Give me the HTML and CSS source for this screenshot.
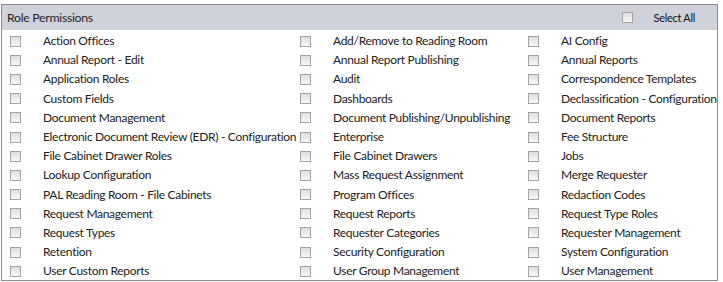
FILE: index.html
```html
<!DOCTYPE html>
<html>

<head>
  <meta name="viewport" content="width=device-width, initial-scale=1">
  <link rel="stylesheet" href="styles.css">
</head>

<body>

  <div class="panel">
    <div class="panel-head">
      <span class="title">Role Permissions</span>
      <label class="select-all"><span class="box"></span><span>Select All</span></label>
    </div>
    <div class="perms">
      <label class="perm"><span class="box"></span>Action Offices</label>
      <label class="perm"><span class="box"></span>Add/Remove to Reading Room</label>
      <label class="perm"><span class="box"></span>AI Config</label>

      <label class="perm"><span class="box"></span>Annual Report - Edit</label>
      <label class="perm"><span class="box"></span>Annual Report Publishing</label>
      <label class="perm"><span class="box"></span>Annual Reports</label>

      <label class="perm"><span class="box"></span>Application Roles</label>
      <label class="perm"><span class="box"></span>Audit</label>
      <label class="perm"><span class="box"></span>Correspondence Templates</label>

      <label class="perm"><span class="box"></span>Custom Fields</label>
      <label class="perm"><span class="box"></span>Dashboards</label>
      <label class="perm"><span class="box"></span>Declassification - Configuration</label>

      <label class="perm"><span class="box"></span>Document Management</label>
      <label class="perm"><span class="box"></span>Document Publishing/Unpublishing</label>
      <label class="perm"><span class="box"></span>Document Reports</label>

      <label class="perm"><span class="box"></span>Electronic Document Review (EDR) - Configuration</label>
      <label class="perm"><span class="box"></span>Enterprise</label>
      <label class="perm"><span class="box"></span>Fee Structure</label>

      <label class="perm"><span class="box"></span>File Cabinet Drawer Roles</label>
      <label class="perm"><span class="box"></span>File Cabinet Drawers</label>
      <label class="perm"><span class="box"></span>Jobs</label>

      <label class="perm"><span class="box"></span>Lookup Configuration</label>
      <label class="perm"><span class="box"></span>Mass Request Assignment</label>
      <label class="perm"><span class="box"></span>Merge Requester</label>

      <label class="perm"><span class="box"></span>PAL Reading Room - File Cabinets</label>
      <label class="perm"><span class="box"></span>Program Offices</label>
      <label class="perm"><span class="box"></span>Redaction Codes</label>

      <label class="perm"><span class="box"></span>Request Management</label>
      <label class="perm"><span class="box"></span>Request Reports</label>
      <label class="perm"><span class="box"></span>Request Type Roles</label>

      <label class="perm"><span class="box"></span>Request Types</label>
      <label class="perm"><span class="box"></span>Requester Categories</label>
      <label class="perm"><span class="box"></span>Requester Management</label>

      <label class="perm"><span class="box"></span>Retention</label>
      <label class="perm"><span class="box"></span>Security Configuration</label>
      <label class="perm"><span class="box"></span>System Configuration</label>

      <label class="perm"><span class="box"></span>User Custom Reports</label>
      <label class="perm"><span class="box"></span>User Group Management</label>
      <label class="perm"><span class="box"></span>User Management</label>
    </div>
  </div>

</body>

</html>
```

FILE: styles.css
```css
body {
  margin: 0;
  padding: 4px 0 0 1px;
  font-family: Lato, "Open Sans", Arial, sans-serif;
  font-size: 12px;
  letter-spacing: -0.3px;
  color: #222;
  background: #fff;
}

.panel {
  width: 715px;
  border: 1px solid #8c8c8c;
  overflow: hidden;
}

.panel-head {
  height: 25px;
  background-color: #cfd2db;
  display: flex;
  align-items: center;
  justify-content: space-between;
  padding: 0 22px 0 5px;
}

.title {
  font-size: 12.3px;
  color: #1f1f1f;
}

.select-all {
  display: flex;
  align-items: center;
  gap: 21px;
  font-size: 11px;
  color: #111;
}

.perms {
  display: grid;
  grid-template-columns: 290px 228px 1fr;
  grid-auto-rows: 19.2px;
  padding-top: 1px;
}

.perm {
  display: flex;
  align-items: center;
  padding-left: 8px;
  white-space: nowrap;
  color: #222;
}

.perm .box {
  margin-right: 22px;
  margin-top: 1px;
}

.box {
  display: inline-block;
  width: 9px;
  height: 9px;
  border: 1px solid #a3a3a3;
  background: linear-gradient(#dedede, #f7f7f7);
  flex: none;
}
```
